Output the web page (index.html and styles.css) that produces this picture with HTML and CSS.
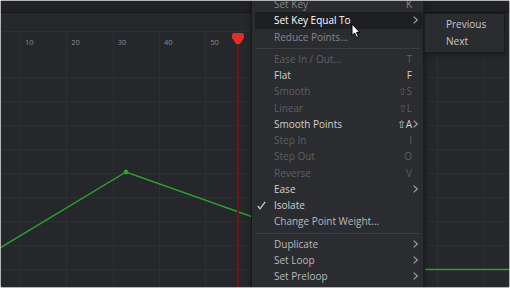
FILE: index.html
```html
<!DOCTYPE html>
<html lang="en">
<head>
    <meta charset="UTF-8">
    <meta name="viewport" content="width=device-width, initial-scale=1.0">
    <title>Spline Editor</title>
    <link rel="stylesheet" href="styles.css">
</head>
<body>
    <div class="app">
        <div class="topbar"></div>
        <div class="toolbar"></div>

        <div class="graph">
            <svg class="canvas" width="508" height="255" viewBox="0 0 508 255">
                <g class="grid">
                    <line x1="19.5" y1="0" x2="19.5" y2="255"/>
                    <line x1="65.5" y1="0" x2="65.5" y2="255"/>
                    <line x1="112.5" y1="0" x2="112.5" y2="255"/>
                    <line x1="158.5" y1="0" x2="158.5" y2="255"/>
                    <line x1="204.5" y1="0" x2="204.5" y2="255"/>
                    <line x1="251.5" y1="0" x2="251.5" y2="255"/>
                    <line x1="297.5" y1="0" x2="297.5" y2="255"/>
                    <line x1="343.5" y1="0" x2="343.5" y2="255"/>
                    <line x1="390.5" y1="0" x2="390.5" y2="255"/>
                    <line x1="436.5" y1="0" x2="436.5" y2="255"/>
                    <line x1="482.5" y1="0" x2="482.5" y2="255"/>
                    <line x1="0" y1="45.5" x2="508" y2="45.5"/>
                    <line x1="0" y1="69.5" x2="508" y2="69.5"/>
                    <line x1="0" y1="93.5" x2="508" y2="93.5"/>
                    <line x1="0" y1="117.5" x2="508" y2="117.5"/>
                    <line x1="0" y1="141.5" x2="508" y2="141.5"/>
                    <line x1="0" y1="165.5" x2="508" y2="165.5"/>
                    <line x1="0" y1="189.5" x2="508" y2="189.5"/>
                    <line x1="0" y1="213.5" x2="508" y2="213.5"/>
                    <line x1="0" y1="237.5" x2="508" y2="237.5"/>
                </g>
                <polyline class="curve" points="-1,216 125,140 400,237.5 510,237.5"/>
                <circle class="point" cx="125" cy="140" r="2.4"/>
                <rect class="playhead-line" x="236" y="10" width="2" height="245"/>
                <path class="playhead" d="M233 1 H241 Q243 1 243 3 V6 L239 12 H235 L231 6 V3 Q231 1 233 1 Z"/>
            </svg>
            <div class="ruler">
                <span>10</span>
                <span>20</span>
                <span>30</span>
                <span>40</span>
                <span>50</span>
            </div>
        </div>

        <div class="menu">
            <div class="item dim"><span></span><span>Set Key</span><span class="key">K</span><span></span></div>
            <div class="item active"><span></span><span>Set Key Equal To</span><span class="key"></span><span class="arrow"><svg width="5" height="8" viewBox="0 0 5 8"><polyline points="0.6,0.6 4.3,4 0.6,7.4"/></svg></span></div>
            <div class="item dim"><span></span><span>Reduce Points...</span><span class="key"></span><span></span></div>
            <div class="sep"></div>
            <div class="item off"><span></span><span>Ease In / Out...</span><span class="key">T</span><span></span></div>
            <div class="item"><span></span><span>Flat</span><span class="key">F</span><span></span></div>
            <div class="item off"><span></span><span>Smooth</span><span class="key">⇧S</span><span></span></div>
            <div class="item off"><span></span><span>Linear</span><span class="key">⇧L</span><span></span></div>
            <div class="item"><span></span><span>Smooth Points</span><span class="key">⇧A</span><span class="arrow"><svg width="5" height="8" viewBox="0 0 5 8"><polyline points="0.6,0.6 4.3,4 0.6,7.4"/></svg></span></div>
            <div class="item off"><span></span><span>Step In</span><span class="key">I</span><span></span></div>
            <div class="item off"><span></span><span>Step Out</span><span class="key">O</span><span></span></div>
            <div class="item off"><span></span><span>Reverse</span><span class="key">V</span><span></span></div>
            <div class="item"><span></span><span>Ease</span><span class="key"></span><span class="arrow"><svg width="5" height="8" viewBox="0 0 5 8"><polyline points="0.6,0.6 4.3,4 0.6,7.4"/></svg></span></div>
            <div class="item"><span class="check"><svg width="9" height="9" viewBox="0 0 9 9"><polyline points="0.8,5 3,7.8 8.2,0.8"/></svg></span><span>Isolate</span><span class="key"></span><span></span></div>
            <div class="item soft"><span></span><span>Change Point Weight...</span><span class="key"></span><span></span></div>
            <div class="sep"></div>
            <div class="item soft"><span></span><span>Duplicate</span><span class="key"></span><span class="arrow"><svg width="5" height="8" viewBox="0 0 5 8"><polyline points="0.6,0.6 4.3,4 0.6,7.4"/></svg></span></div>
            <div class="item soft"><span></span><span>Set Loop</span><span class="key"></span><span class="arrow"><svg width="5" height="8" viewBox="0 0 5 8"><polyline points="0.6,0.6 4.3,4 0.6,7.4"/></svg></span></div>
            <div class="item soft"><span></span><span>Set Preloop</span><span class="key"></span><span class="arrow"><svg width="5" height="8" viewBox="0 0 5 8"><polyline points="0.6,0.6 4.3,4 0.6,7.4"/></svg></span></div>
        </div>

        <div class="submenu">
            <div class="subitem">Previous</div>
            <div class="subitem">Next</div>
        </div>

        <svg class="cursor" width="10" height="16" viewBox="0 0 10 16">
            <path d="M1 1 V12.5 L3.6 10 L5.6 14.6 L7.4 13.8 L5.5 9.4 H8.8 Z"/>
        </svg>
    </div>
</body>
</html>
```

FILE: styles.css
```css
body {
    margin: 0;
    background-color: #ffffff;
    font-family: 'Open Sans', 'DejaVu Sans', sans-serif;
}

.app {
    position: relative;
    width: 510px;
    height: 288px;
    box-sizing: border-box;
    border: 1px solid #b4b4b4;
    border-radius: 2px;
    background-color: #26272b;
    display: flex;
    flex-direction: column;
    overflow: hidden;
}

.topbar {
    height: 11px;
    background-color: #202124;
    border-bottom: 1px solid #151618;
}

.toolbar {
    height: 18px;
    background-color: #27282b;
    border-bottom: 1px solid #5e1b1d;
}

.graph {
    position: relative;
    flex: 1;
}

.canvas {
    position: absolute;
    left: 0;
    top: 0;
}

.grid line {
    stroke: #2e2f33;
    stroke-width: 1;
}

.curve {
    fill: none;
    stroke: #2aa32a;
    stroke-width: 1.4;
}

.point {
    fill: #2aa32a;
}

.playhead-line {
    fill: #6e1416;
}

.playhead {
    fill: #e22c25;
}

.ruler {
    position: relative;
    display: flex;
    padding: 6px 0 0 24px;
}

.ruler span {
    width: 46.33px;
    font-size: 7.5px;
    line-height: 8px;
    color: #8a8b8f;
}

/* context menu */
.menu {
    position: absolute;
    left: 250px;
    top: -9px;
    bottom: -4px;
    width: 174px;
    box-sizing: border-box;
    padding: 4px 1px 4px 3px;
    background-color: #2b2c30;
    border-left: 1px solid #17181b;
    border-right: 2px solid #1c1d20;
    box-shadow: 0 2px 6px rgba(0, 0, 0, 0.35);
    font-size: 10px;
    color: #d0d0d2;
}

.item {
    display: grid;
    grid-template-columns: 19px 1fr auto 10px;
    align-items: center;
    height: 16.25px;
    white-space: nowrap;
}

.item.active {
    background-color: #1e1f22;
    color: #ffffff;
}

.item.dim {
    color: #85868a;
}

.item.off {
    color: #5e5f63;
}

.item.soft {
    color: #b8b9bc;
}

.item .key {
    text-align: right;
}

.arrow {
    display: flex;
    padding-left: 1px;
}

.arrow polyline {
    fill: none;
    stroke: #9c9da1;
    stroke-width: 1.2;
}

.check {
    display: flex;
    padding-left: 2px;
}

.check polyline {
    fill: none;
    stroke: #d0d0d2;
    stroke-width: 1.3;
}

.sep {
    height: 1px;
    margin: 3px 2px 2px 0;
    background-color: #3c3d41;
}

.submenu {
    position: absolute;
    left: 423px;
    top: 12px;
    width: 81px;
    height: 40px;
    box-sizing: border-box;
    padding: 2px 0 0 21px;
    background-color: #2b2c30;
    border: 1px solid #1b1c1f;
    box-shadow: 0 2px 5px rgba(0, 0, 0, 0.3);
    font-size: 10px;
    color: #c9c9cb;
}

.subitem {
    height: 16.5px;
    line-height: 16.5px;
}

.cursor {
    position: absolute;
    left: 350px;
    top: 22px;
}

.cursor path {
    fill: #ffffff;
    stroke: #000000;
    stroke-width: 1;
    stroke-linejoin: round;
}
```
